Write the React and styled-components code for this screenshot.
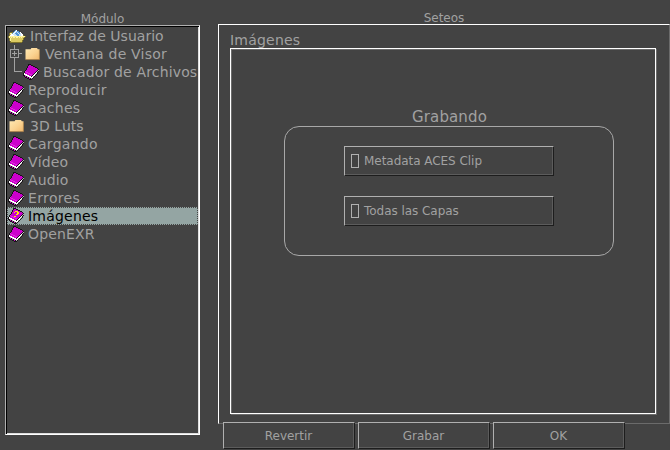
import React from "react";
import styled, { createGlobalStyle } from "styled-components";

const Global = createGlobalStyle`
  * { box-sizing: border-box; }
  body { margin: 0; background: #434343; overflow: hidden; }
`;
const Window = styled.main`
  width: 670px; height: 450px; display: flex; gap: 18px; padding-left: 5px;
  background: #434343; color: #a1a1a1; font-family: "DejaVu Sans", sans-serif; font-size: 12px;
`;
const Side = styled.section`width: 195px; flex: none;`;
const Caption = styled.h2`
  margin: 0; height: ${p => p.$h}px; padding-top: ${p => p.$top}px; line-height: 14px;
  font-size: 12px; font-weight: 400; text-align: center;
`;
const Tree = styled.ul`
  list-style: none; margin: 0; padding: 1px; width: 195px; height: 410px;
  border: 1px solid; border-color: #b0b0b0 #fff #fff #b0b0b0;
  box-shadow: inset 1px 1px #000, inset -1px -1px #dedede;
`;
const Row = styled.li`
  height: 18px; display: flex; align-items: center; padding-left: 1px; gap: ${p => p.$gap}px;
  font-size: 14px; line-height: 18px; white-space: nowrap; letter-spacing: ${p => p.$track}px;
  color: ${p => p.$on ? "#000" : "#a1a1a1"};
  background: ${p => p.$on ? "#94a5a3" : "transparent"};
  outline: ${p => p.$on ? "1px dotted #444" : "none"}; outline-offset: -1px;
`;
const Art = styled.svg`display: block; flex: none;`;
const CrispArt = styled(Art)`shape-rendering: crispEdges;`;
const Main = styled.section`width: 452px; flex: none;`;
const Outer = styled.div`
  height: 400px; padding: 8px 12px 0 11px; border: 1px solid; border-color: #fff #6b6b6b #6b6b6b #fff;
`;
const PageTitle = styled.div`height: 15px; line-height: 15px; font-size: 14px; letter-spacing: 0.22px;`;
const Page = styled.div`
  width: 426px; height: 366px; border: 1px solid #fff; padding: 60px 0 0 53px;
  box-shadow: inset 1px 1px #6b6b6b, 1px 1px #6b6b6b;
`;
const GroupTitle = styled.h3`
  margin: 0; width: 330px; height: 17px; padding-left: 1px; line-height: 17px; font-size: 15px; font-weight: 400;
  letter-spacing: 0.12px; text-align: center;
`;
const Group = styled.div`
  width: 330px; height: 130px; border: 1px solid #a8a8a8; border-radius: 15px;
  display: flex; flex-direction: column; gap: 20px; padding: 19px 59px;
`;
const Button = styled.button`
  margin: 0; width: 132px; height: 27px; padding: 0 1px 0 0;
  display: flex; align-items: center; justify-content: center; gap: 5px;
  border: 1px solid; border-color: #b0b0b0 #1d1d1d #1d1d1d #b0b0b0; box-shadow: inset -1px -1px #5c5c5c;
  background: #434343; color: #a1a1a1; font: 12px "DejaVu Sans", sans-serif; white-space: nowrap;
`;
const CheckButton = styled(Button)`
  width: 210px; height: 30px; padding-left: 6px; justify-content: flex-start; letter-spacing: -0.04px;
`;
const Box = styled.span`width: 8px; height: 14px; border: 1px solid #b0b0b0;`;
const Actions = styled.footer`position: relative; margin-top: -2px; padding-left: 5px; display: flex; gap: 3px;`;
const BranchSlot = styled.span`width: 16px; height: 18px; margin: 0 -4px 0 -1px; flex: none;`;

const palette = {
  k: "#181418", m: "#cc00cc", p: "#dd30dd", w: "#fff", g: "#b8b8b8", y: "#ffef00",
  b: "#5796d6", l: "#c9e4fa", o: "#dccb62", Y: "#fff3a0", q: "#80742a",
};
function Pixels({ rows }) {
  return <CrispArt width={rows[0].length} height={rows.length}>
    {rows.flatMap((r, y) => [...r].map((c, x) => palette[c] ? <rect key={`${x}-${y}`} x={x} y={y} width="1" height="1" fill={palette[c]} /> : null))}
  </CrispArt>;
}
const book = [
  ".....kkk........",
  ".....kmmkk......",
  "....kmmmmmkk....",
  "....kmmmmmmmkk..",
  "...kmmmmmmmmmmk.",
  "...kmmmmmmmmmmmk",
  "..kmmmmmmmmmmmkg",
  ".kpmmmmmmmmmmkgk",
  ".kmppmmmmmmmkwk.",
  "kwmmmppmmmmkwgk.",
  "kwwwmmmppmkwgk..",
  "kkgwwwmmmkwwk...",
  ".kmkgwwwkwgk....",
  "..kkmkgwwwk.....",
  "....kkmkgk......",
  "......kkk.......",
];
const question = { 3: [7, 8, 9], 4: [6, 9, 10], 5: [9, 10], 6: [8, 9], 8: [6, 7] };
const marked = book.map((r, y) => [...r].map((c, x) => (question[y] || []).includes(x) ? "y" : c).join(""));
const openFolder = [
  ".......bw.........",
  "......bwlbb.......",
  "..qqqbwlblbbw.....",
  ".qYYbwlbbblblw....",
  ".qowwlllbbbllww...",
  ".qwwwwlllbbllwwq..",
  "qYYYYYYYYYYYYYYYYq",
  "qYoYoYYoYYoYoYooq.",
  ".qYooooooooooooq..",
  ".qYooooooooooooq..",
  ".qYoooooooooooq...",
  "..qoooooooooooq...",
  "..qqqqqqqqqqqq....",
];
const Folder = () => <Art width="16" height="14">
  <defs><linearGradient id="manila" x1="0" y1="0" x2="1" y2="1">
    <stop offset="0" stopColor="#ffe9b4" /><stop offset="0.55" stopColor="#fbd391" /><stop offset="1" stopColor="#f0b76c" />
  </linearGradient></defs>
  <path d="M1.5 2.2H6.6L7.4 1H13L13.8 2.2H15.5V12.5H1.5Z" fill="url(#manila)" />
  <path d="M15.4 3V12.6H1.5" fill="none" stroke="#b08449" strokeWidth="0.7" />
</Art>;
const Icon = ({ kind }) => kind === "folder" ? <Folder />
  : <Pixels rows={{ book, marked, openFolder }[kind]} />;
const Branch = ({ last }) => <CrispArt width="16" height="18" fill="none" stroke="#a1a1a1">
  {last ? <path d="M7.5 0V8.5H15" /> : <path d="M7.5 0V4M7.5 13V18M12 8.5H15M3.5 4.5H11.5V12.5H3.5ZM5 8.5H10M7.5 6V11" />}
</CrispArt>;

const items = [
  { label: "Interfaz de Usuario", icon: "openFolder", track: 0.02 },
  { label: "Ventana de Visor", icon: "folder", branch: "open", track: 0.2 },
  { label: "Buscador de Archivos", icon: "book", branch: "last", track: 0.15 },
  { label: "Reproducir", icon: "book", track: 0.32 },
  { label: "Caches", icon: "book", track: 0.25 },
  { label: "3D Luts", icon: "folder", track: 0.05 },
  { label: "Cargando", icon: "book", track: 0.26 },
  { label: "Vídeo", icon: "book", track: 0.14 },
  { label: "Audio", icon: "book", track: 0.1 },
  { label: "Errores", icon: "book", track: 0.36 },
  { label: "Imágenes", icon: "marked", track: 0.22 },
  { label: "OpenEXR", icon: "book", track: 0.16 },
];
const gaps = { openFolder: 4, folder: 6, book: 4, marked: 4 };

export default function App() {
  return <><Global /><Window>
    <Side>
      <Caption $h={25} $top={12}>Módulo</Caption>
      <Tree>
        {items.map(item => <Row key={item.label} $on={item.label === "Imágenes"} $gap={item.branch === "open" ? 5 : gaps[item.icon]} $track={item.track}>
          {item.branch && <BranchSlot><Branch last={item.branch === "last"} /></BranchSlot>}
          <Icon kind={item.icon} />{item.label}
        </Row>)}
      </Tree>
    </Side>
    <Main>
      <Caption $h={24} $top={11}>Seteos</Caption>
      <Outer>
        <PageTitle>Imágenes</PageTitle>
        <Page>
          <GroupTitle>Grabando</GroupTitle>
          <Group>
            <CheckButton><Box />Metadata ACES Clip</CheckButton>
            <CheckButton><Box />Todas las Capas</CheckButton>
          </Group>
        </Page>
      </Outer>
      <Actions>
        {["Revertir", "Grabar", "OK"].map(t => <Button key={t}>{t}</Button>)}
      </Actions>
    </Main>
  </Window></>;
}
